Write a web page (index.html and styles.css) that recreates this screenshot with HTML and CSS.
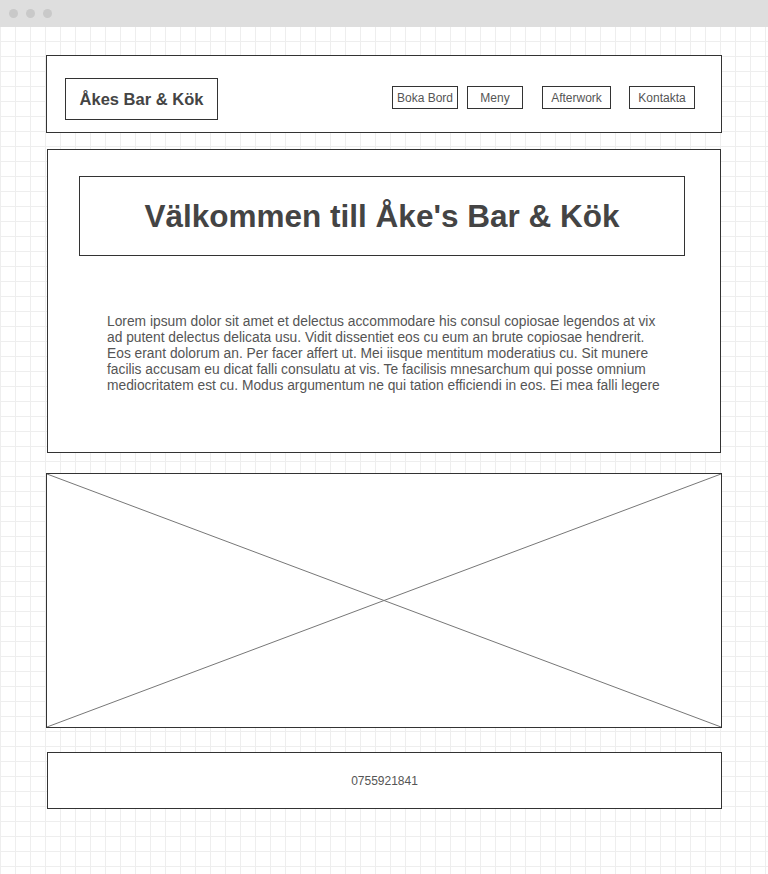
FILE: index.html
```html
<!DOCTYPE html>
<html lang="sv">
<head>
  <meta charset="UTF-8">
  <meta name="viewport" content="width=device-width, initial-scale=1.0">
  <title>Åkes Bar &amp; Kök</title>
  <link rel="stylesheet" href="styles.css">
</head>
<body>
  <div class="titlebar">
    <span class="dot"></span>
    <span class="dot"></span>
    <span class="dot"></span>
  </div>

  <div class="canvas">
    <header class="site-header">
      <div class="logo">Åkes Bar &amp; Kök</div>
      <nav class="nav">
        <a class="nav-btn btn-boka">Boka Bord</a>
        <a class="nav-btn btn-meny">Meny</a>
        <a class="nav-btn btn-after">Afterwork</a>
        <a class="nav-btn btn-kontakt">Kontakta</a>
      </nav>
    </header>

    <section class="hero">
      <div class="hero-title">
        <h1>Välkommen till Åke's Bar &amp; Kök</h1>
      </div>
      <p class="hero-text">Lorem ipsum dolor sit amet et delectus accommodare his consul copiosae legendos at vix ad putent delectus delicata usu. Vidit dissentiet eos cu eum an brute copiosae hendrerit. Eos erant dolorum an. Per facer affert ut. Mei iisque mentitum moderatius cu. Sit munere facilis accusam eu dicat falli consulatu at vis. Te facilisis mnesarchum qui posse omnium mediocritatem est cu. Modus argumentum ne qui tation efficiendi in eos. Ei mea falli legere</p>
    </section>

    <div class="image-placeholder">
      <svg viewBox="0 0 100 100" preserveAspectRatio="none">
        <line x1="0" y1="0" x2="100" y2="100" vector-effect="non-scaling-stroke"></line>
        <line x1="100" y1="0" x2="0" y2="100" vector-effect="non-scaling-stroke"></line>
      </svg>
    </div>

    <footer class="site-footer">0755921841</footer>
  </div>
</body>
</html>
```

FILE: styles.css
```css
* {
  box-sizing: border-box;
  margin: 0;
  padding: 0;
}

body {
  font-family: "Liberation Sans", Arial, sans-serif;
  background-color: #fff;
  color: #444;
  width: 768px;
  min-height: 874px;
}

.titlebar {
  height: 27px;
  background-color: #dedede;
  display: flex;
  align-items: center;
  gap: 8px;
  padding-left: 9px;
}

.dot {
  width: 9px;
  height: 9px;
  border-radius: 50%;
  background-color: #c9c9c9;
}

.canvas {
  min-height: 847px;
  padding: 28px 46px 40px;
  background-color: #fff;
  background-image:
    linear-gradient(to right, #eeeeee 1px, transparent 1px),
    linear-gradient(to bottom, #eeeeee 1px, transparent 1px);
  background-size: 15px 15px;
  background-position: 0 -1px;
}

/* header */
.site-header {
  height: 78px;
  border: 1px solid #333;
  background-color: #fff;
  display: flex;
  align-items: flex-start;
  justify-content: space-between;
  padding: 22px 26px 0 18px;
}

.logo {
  width: 153px;
  height: 42px;
  border: 1px solid #333;
  display: flex;
  align-items: center;
  justify-content: center;
  font-size: 16.5px;
  font-weight: bold;
  color: #444;
}

.nav {
  display: flex;
  margin-top: 8px;
}

.nav-btn {
  height: 23px;
  border: 1px solid #333;
  display: flex;
  align-items: center;
  justify-content: center;
  font-size: 12px;
  color: #555;
}

.btn-boka {
  width: 66px;
}

.btn-meny {
  width: 56px;
  margin-left: 9px;
}

.btn-after {
  width: 69px;
  margin-left: 19px;
}

.btn-kontakt {
  width: 66px;
  margin-left: 18px;
}

/* hero */
.hero {
  margin: 16px 1px 0;
  height: 304px;
  border: 1px solid #333;
  background-color: #fff;
  padding: 26px 35px 0 31px;
}

.hero-title {
  height: 80px;
  border: 1px solid #333;
  display: flex;
  align-items: center;
  justify-content: center;
}

.hero-title h1 {
  font-size: 31.5px;
  font-weight: bold;
  color: #444;
}

.hero-text {
  width: 560px;
  margin: 58px 0 0 28px;
  font-size: 13.8px;
  line-height: 16px;
  color: #555;
}

/* image */
.image-placeholder {
  margin-top: 20px;
  height: 255px;
  border: 1px solid #333;
  background-color: #fff;
}

.image-placeholder svg {
  display: block;
  width: 100%;
  height: 100%;
}

.image-placeholder line {
  stroke: #777;
  stroke-width: 1;
}

/* footer */
.site-footer {
  margin: 24px 0 0 1px;
  height: 57px;
  border: 1px solid #333;
  background-color: #fff;
  display: flex;
  align-items: center;
  justify-content: center;
  font-size: 12px;
  color: #555;
}
```
